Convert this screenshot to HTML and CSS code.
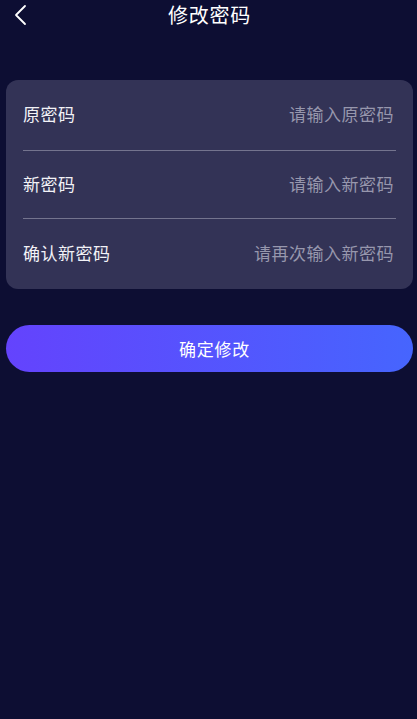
FILE: index.html
```html
<!DOCTYPE html>
<html lang="zh-CN">
<head>
    <meta charset="UTF-8">
    <meta name="viewport" content="width=device-width, initial-scale=1.0">
    <title>修改密码</title>
    <link rel="stylesheet" href="styles.css">
</head>
<body>
    <div class="header">
        <button class="back" aria-label="返回">
            <svg width="14" height="22" viewBox="0 0 14 22">
                <path d="M11 2 L2 11 L11 20" fill="none" stroke="#fff" stroke-width="1.8" stroke-linecap="round" stroke-linejoin="round"/>
            </svg>
        </button>
        <h1>修改密码</h1>
    </div>

    <div class="card">
        <div class="row">
            <label for="old-pwd">原密码</label>
            <input type="password" id="old-pwd" placeholder="请输入原密码">
        </div>
        <div class="row">
            <label for="new-pwd">新密码</label>
            <input type="password" id="new-pwd" placeholder="请输入新密码">
        </div>
        <div class="row">
            <label for="confirm-pwd">确认新密码</label>
            <input type="password" id="confirm-pwd" placeholder="请再次输入新密码">
        </div>
    </div>

    <button class="submit">确定修改</button>
</body>
</html>
```

FILE: styles.css
```css
* {
    box-sizing: border-box;
}

body {
    margin: 0;
    padding: 0 4px 0 6px;
    min-height: 100vh;
    background: #0d0e33;
    color: #fff;
    font-family: "Noto Sans CJK SC", "Noto Sans", sans-serif;
}

.header {
    position: relative;
    height: 30px;
    display: flex;
    align-items: center;
    justify-content: center;
}

.header h1 {
    margin: 0;
    font-size: 20px;
    font-weight: 400;
    letter-spacing: 0.8px;
    line-height: 30px;
}

.back {
    position: absolute;
    left: 8px;
    top: 4px;
    padding: 0;
    border: none;
    background: none;
    width: 14px;
    height: 22px;
}

.card {
    margin-top: 50px;
    padding: 0 17px;
    background: #333356;
    border-radius: 12px;
}

.row {
    height: 71px;
    padding-bottom: 3px;
    display: flex;
    align-items: center;
    justify-content: space-between;
    border-bottom: 1px solid #74748e;
}

.row:nth-child(2) {
    height: 68px;
}

.row:last-child {
    border-bottom: none;
    height: 70px;
}

.row label {
    font-size: 17px;
    letter-spacing: 0.5px;
    color: #f2f2f6;
    white-space: nowrap;
}

.row input {
    flex: 1;
    min-width: 0;
    padding: 0 2px 0 0;
    border: none;
    outline: none;
    background: transparent;
    text-align: right;
    font-family: inherit;
    font-size: 17px;
    letter-spacing: 0.5px;
    color: #fff;
}

.row input::placeholder {
    color: #9797ad;
}

.submit {
    display: block;
    width: 100%;
    height: 47px;
    margin-top: 36px;
    padding: 0 0 0 10px;
    border: none;
    border-radius: 24px;
    background: linear-gradient(90deg, #6443fd, #4665fe);
    color: #fff;
    font-family: inherit;
    font-size: 17px;
    font-weight: 400;
    letter-spacing: 0.8px;
}
```
